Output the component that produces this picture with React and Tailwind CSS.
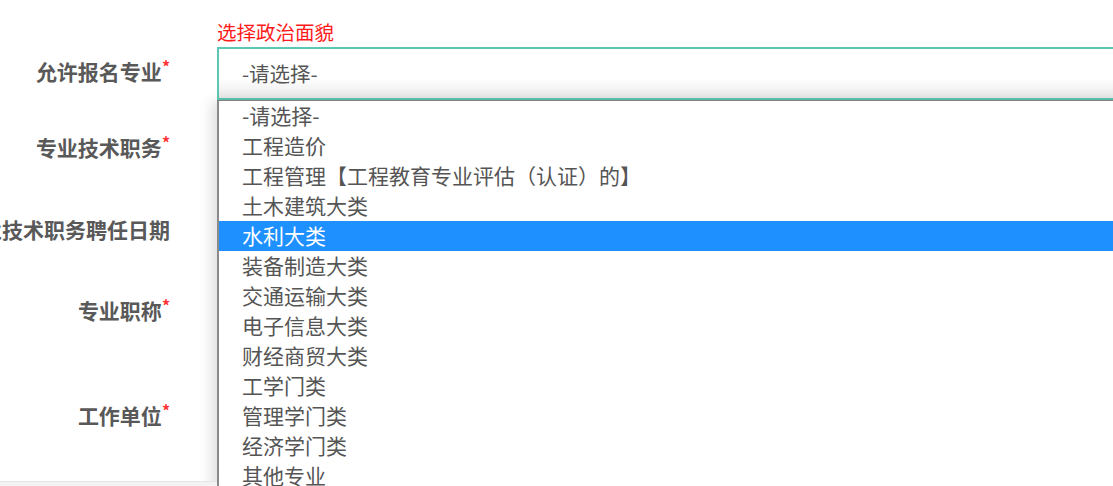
import React from "react";

const labels = [
  { text: "允许报名专业", required: true, mt: "mt-[57px]" },
  { text: "专业技术职务", required: true, mt: "mt-[46px]" },
  { text: "专业技术职务聘任日期", required: false, mt: "mt-[52px]" },
  { text: "专业职称", required: true, mt: "mt-[51px]" },
  { text: "工作单位", required: true, mt: "mt-[75px]" },
];

const options = [
  "-请选择-",
  "工程造价",
  "工程管理【工程教育专业评估（认证）的】",
  "土木建筑大类",
  "水利大类",
  "装备制造大类",
  "交通运输大类",
  "电子信息大类",
  "财经商贸大类",
  "工学门类",
  "管理学门类",
  "经济学门类",
  "其他专业",
];

export default function App() {
  const selected = 4;

  return (
    <div
      className="relative w-[1113px] h-[486px] overflow-hidden bg-white"
      style={{ fontFamily: '"Microsoft YaHei", "Noto Sans CJK SC", sans-serif' }}
    >
      <div className="flex">
        {/* label column */}
        <div className="w-[170px] shrink-0 flex flex-col">
          {labels.map((l) => (
            <div
              key={l.text}
              className={`${l.mt} h-[30px] flex items-center justify-end whitespace-nowrap text-[21px] font-bold text-[#595959]`}
            >
              <span>{l.text}</span>
              {l.required && (
                <span className="self-start -mt-[1px] text-[16px] leading-[20px] text-[#f33] font-bold">*</span>
              )}
            </div>
          ))}
        </div>

        {/* field column */}
        <div className="ml-[47px] flex-1 relative">
          <div className="pt-[19px] h-[47px] text-[19.5px] leading-[26px] text-[#ff1a1a] whitespace-nowrap">
            选择政治面貌
          </div>
          <div className="w-[920px] h-[53px] border-2 border-[#5cc7b2] bg-gradient-to-b from-white from-60% to-[#e9e9e9] flex items-center pl-[23px] text-[20.5px] text-[#555] shadow-[0_1px_0_#888]">
            -请选择-
          </div>

          {/* open dropdown list */}
          <div className="absolute left-0 top-[101px] w-[920px] bg-white border-l-2 border-[#8a8a8a] shadow-[-6px_0_12px_rgba(0,0,0,0.12)]">
            {options.map((o, i) => (
              <div
                key={o}
                className={`h-[30px] flex items-center pl-[23px] text-[21px] whitespace-nowrap ${
                  i === selected ? "bg-[#1e90ff] text-white" : "text-[#555]"
                }`}
              >
                {o}
              </div>
            ))}
          </div>
        </div>
      </div>

      <div className="absolute left-0 bottom-0 w-[217px] h-[5px] bg-[#f3f3f3] border-t border-[#e6e6e6]" />
    </div>
  );
}
